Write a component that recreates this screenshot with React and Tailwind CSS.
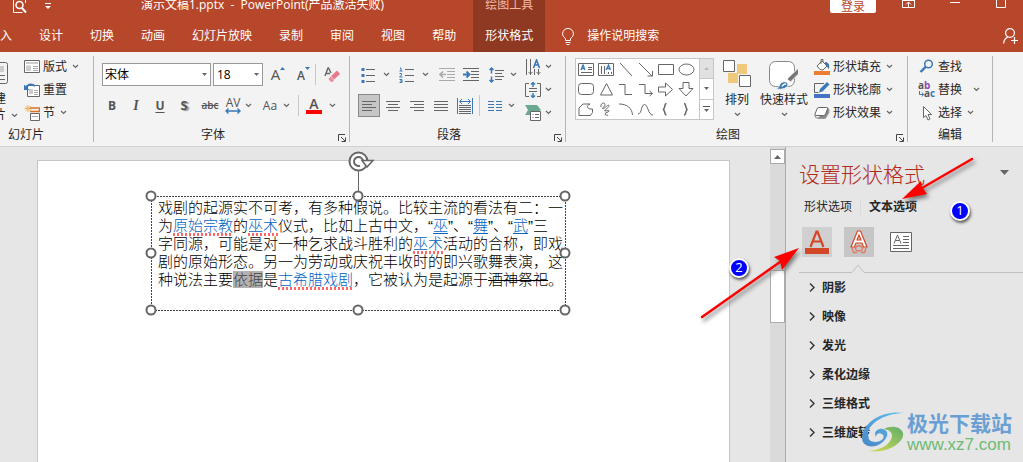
const TABS = ['入', '设计', '切换', '动画', '幻灯片放映', '录制', '审阅', '视图', '帮助']

const SECTIONS = ['阴影', '映像', '发光', '柔化边缘', '三维格式', '三维旋转']

const HANDLES = [
  ['0%', '0%'], ['50%', '0%'], ['100%', '0%'],
  ['0%', '50%'], ['100%', '50%'],
  ['0%', '100%'], ['50%', '100%'], ['100%', '100%']
]

const Icon = ({ w = 16, h = 16, children, className = '' }) => (
  <svg width={w} height={h} viewBox={`0 0 ${w} ${h}`} fill="none" stroke="#666" className={`shrink-0 ${className}`} aria-hidden="true">
    {children}
  </svg>
)

const Chevron = ({ className = '' }) => (
  <Icon w={7} h={5} className={className}>
    <path d="M1 1l2.500 2.500L6 1" stroke="#666" strokeWidth="1.200" />
  </Icon>
)

const Triangle = ({ up, color = '#666', className = '' }) => (
  <Icon w={5} h={3} className={className}>
    <path d={up ? 'M0 3h5L2.500 0z' : 'M0 0h5L2.500 3z'} fill={color} stroke="none" />
  </Icon>
)

const Divider = () => <div className="my-1 w-px shrink-0 bg-[#b4b4b4]" />

const SmallDivider = ({ className = '' }) => <div className={`h-[21px] w-px shrink-0 bg-[#c8c8c8] ${className}`} />

const Tool = ({ label, className = '', children }) => (
  <button type="button" aria-label={label} className={`flex h-[23px] shrink-0 items-center justify-center ${className}`}>
    {children}
  </button>
)

function Group({ label, launcher, className = '', labelClass = '', children }) {
  return (
    <section className={`flex shrink-0 flex-col ${className}`}>
      <div className="flex h-[72px]">{children}</div>
      <div className={`flex h-[22px] ${labelClass}`}>
        <h2 className="flex-1 text-center leading-[22px]">{label}</h2>
        {launcher && (
          <button type="button" aria-label={`${label}设置`} className="mr-[3px] mb-1 ml-1.5 self-end">
            <Icon w={8} h={8}>
              <path d="M.5 7V.5H7M3 3l4 4M7.500 3.500v4h-4" stroke="#444" />
            </Icon>
          </button>
        )}
      </div>
    </section>
  )
}

const MenuRow = ({ icon, label, chevron, chevronClass = 'ml-[5px]' }) => (
  <button type="button" className="flex h-[23px] items-center whitespace-nowrap">
    {icon}
    <span className="ml-[3px]">{label}</span>
    {chevron && <Chevron className={chevronClass} />}
  </button>
)

function Header() {
  return (
    <header className="flex h-[52px] overflow-hidden bg-[#b7472a] text-white">
      <div className="flex shrink-0 flex-col">
        <div className="flex h-5">
          <Tool label="打印预览" className="ml-[13px] h-[14px]!">
            <Icon w={14} h={14}>
              <path d="M.5 0v12.500h9M12.500 0v3" stroke="#fff" />
              <circle cx="6.500" cy="5" r="3.500" stroke="#fff" strokeWidth="1.500" />
              <path d="M9 8l4 4.500" stroke="#fff" strokeWidth="2" />
            </Icon>
          </Tool>
          <Tool label="自定义快速访问工具栏" className="ml-[18px] h-[10px]!">
            <Icon w={6} h={8}>
              <path d="M0 2.500h6" stroke="#fff" />
              <path d="M0 5h6L3 8z" fill="#fff" stroke="none" />
            </Icon>
          </Tool>
          <h1 className="ml-[90px] w-0 leading-[10px] whitespace-pre">演示文稿1.pptx  -  PowerPoint(产品激活失败)</h1>
        </div>
        <nav className="flex h-8 gap-[27px] pr-[17px]">
          {TABS.map(tab => (
            <button type="button" key={tab} className="leading-8 whitespace-nowrap">{tab}</button>
          ))}
        </nav>
      </div>

      {/* Contextual tab */}
      <div className="flex shrink-0 flex-col bg-[#8f3822] px-3">
        <span className="h-5 leading-[10px] text-[#f5b9a6]">绘图工具</span>
        <button type="button" className="h-8 leading-8">形状格式</button>
      </div>

      <div className="flex flex-1 flex-col">
        <div className="flex h-5 items-start justify-end pr-[17px]">
          <button type="button" className="h-[13px] w-[46px] rounded-b-xs bg-white leading-[8px] text-[#b7472a]">登录</button>
          <Tool label="功能区显示选项" className="ml-[26px] h-[8px]!">
            <Icon w={13} h={8}>
              <path d="M.5 0v7.500h12V0M0 .5h13M6.500 7V2M4 4.500L6.500 2 9 4.500" stroke="#fff" />
            </Icon>
          </Tool>
          <Tool label="最小化" className="ml-[35px] h-[8px]!">
            <Icon w={10} h={8}><path d="M0 2.500h10" stroke="#fff" /></Icon>
          </Tool>
          <Tool label="最大化" className="ml-[36px] h-[8px]!">
            <Icon w={10} h={8}><path d="M.5 0v7.500h9V0" stroke="#fff" /></Icon>
          </Tool>
        </div>
        <div className="flex h-8 items-center justify-between pr-[5px] pl-[17px]">
          <button type="button" className="flex items-center gap-[13px]">
            <Icon w={12} h={17}>
              <path d="M3.500 12.500v-2C1.500 9 .6 7.600.6 5.800a5.400 5.400 0 0 1 10.800 0c0 1.800-.9 3.200-2.900 4.700v2zM3.500 14.500h5M4.500 16.500h3" stroke="#fff" />
            </Icon>
            <span>操作说明搜索</span>
          </button>
          <Tool label="共享">
            <Icon w={15} h={16}>
              <circle cx="7" cy="5" r="4.400" stroke="#fff" strokeWidth="1.200" />
              <path d="M.6 15.500c.3-3.500 2-5.600 4.400-6.500M11.500 9v7M8 12.500h7" stroke="#fff" strokeWidth="1.200" />
            </Icon>
          </Tool>
        </div>
      </div>
    </header>
  )
}

function SlidesGroup() {
  return (
    <Group label="幻灯片" className="w-[93px]" labelClass="pr-[41px]">
      <div className="flex w-6 shrink-0 flex-col pt-[10px]">
        <Icon w={8} h={22}>
          <path d="M0 .5h5.500q2 0 2 2v17q0 2-2 2H0M0 13.500h5M0 17.500h5" />
          <path d="M0 4h4v6H0z" fill="#ccc" stroke="none" />
        </Icon>
        <span className="mt-[7px] flex h-4 w-1.5 justify-end overflow-hidden leading-4">建</span>
        <span className="flex items-center gap-[5px]">
          <span className="flex h-4 w-1.5 justify-end overflow-hidden leading-4">片</span>
          <Chevron />
        </span>
      </div>
      <div className="flex flex-col items-start pt-[3px]">
        <MenuRow
          label="版式"
          chevron
          icon={
            <Icon h={15}>
              <path d="M.5 1.500h15v12H.5z" fill="#fff" />
              <path d="M2 3h12v2H2zM2 6.500h5v5.500H2z" fill="#ccc" stroke="none" />
              <path d="M9 7.500h5M9 9.500h5M9 11.500h5" stroke="#aaa" />
            </Icon>
          }
        />
        <MenuRow
          label="重置"
          icon={
            <Icon>
              <path d="M3.500 3.500h12v11h-12z" fill="#fff" />
              <path d="M5 7h4v5H5z" fill="#ccc" stroke="none" />
              <path d="M10 8.500h4M10 10.500h4M10 12.500h4" stroke="#aaa" />
              <path d="M1 7c2-4.500 6-6 10-3" stroke="#3b78b5" strokeWidth="2" />
              <path d="M0 2.500V8h5.500z" fill="#3b78b5" stroke="none" />
            </Icon>
          }
        />
        <MenuRow
          label="节"
          chevron
          icon={
            <Icon>
              <path d="M4 0v7M.5 3.500h7M1.500 1l5 5M6.500 1l-5 5" stroke="#e8b460" />
              <path d="M6 3h9.500v3.500H6" stroke="#e07020" strokeWidth="1.500" />
              <path d="M6.500 8.500h9v7h-9z" fill="#fff" />
              <path d="M8 11.500h6" stroke="#aaa" />
            </Icon>
          }
        />
      </div>
    </Group>
  )
}

function FontGroup() {
  return (
    <Group label="字体" launcher className="w-[255px]">
      <div className="flex flex-col gap-2 pt-[11px] pl-2 text-[#555]">
        <div className="flex items-center">
          <label className="relative flex items-center">
            <select aria-label="字体" className="h-[23px] w-[109px] appearance-none border border-[#999] bg-white px-0.5 text-[12px] leading-5 text-black">
              <option>宋体</option>
            </select>
            <Triangle className="pointer-events-none absolute right-1" />
          </label>
          <label className="relative ml-0.5 flex items-center">
            <select aria-label="字号" className="h-[23px] w-[50px] appearance-none border border-[#999] bg-white px-[3px] text-[12px] leading-5 text-black">
              <option>18</option>
            </select>
            <Triangle className="pointer-events-none absolute right-1" />
          </label>
          <Tool label="增大字号" className="ml-2 w-[14px]">
            <span className="text-[15px] font-medium">A</span>
            <Triangle up color="#3b78b5" className="mb-3" />
          </Tool>
          <Tool label="减小字号" className="ml-3 w-[13px]">
            <span className="mt-0.5 text-[12px] font-semibold">A</span>
            <Triangle color="#3b78b5" className="mb-3" />
          </Tool>
          <SmallDivider className="mr-[6px] ml-[5px]" />
          <Tool label="清除格式" className="ml-0.5">
            <Icon>
              <path d="M1 9L4 1h.5L7 6M2.500 6.500H6" strokeWidth="1.400" />
              <path d="M7 9l6-5.500L16 7l-6 5.500z" fill="#e8798c" stroke="none" />
              <path d="M6.500 9.500L4.500 12l2.500 3h1.500l1.500-2z" fill="#ec8b9b" stroke="none" />
            </Icon>
          </Tool>
        </div>
        <div className="flex items-center">
          <Tool label="加粗" className="w-5"><b>B</b></Tool>
          <Tool label="倾斜" className="ml-1 w-5"><i className="font-['Liberation_Serif'] text-[14px] font-bold">I</i></Tool>
          <Tool label="下划线" className="ml-1 w-5"><b className="underline underline-offset-2">U</b></Tool>
          <Tool label="文字阴影" className="ml-1 w-5"><b className="text-[13px] text-shadow-[2px_1px_1px_#999]">S</b></Tool>
          <Tool label="删除线" className="ml-1 w-6"><span className="text-[10px] font-semibold line-through">abc</span></Tool>
          <Tool label="字符间距" className="w-[22px] flex-col">
            <span className="text-[12px] leading-[10px] font-medium">AV</span>
            <Icon w={16} h={6}><path d="M1 3h14M3.500.5L1 3l2.500 2.500M12.500.5L15 3l-2.500 2.500" stroke="#3b78b5" strokeWidth="1.400" /></Icon>
          </Tool>
          <Chevron className="ml-px" />
          <Tool label="更改大小写" className="ml-[9px] w-[18px]"><span className="text-[12px] font-medium">Aa</span></Tool>
          <Chevron className="ml-1" />
          <SmallDivider className="ml-2" />
          <Tool label="字体颜色" className="ml-[7px] w-4 flex-col">
            <span className="text-[14px] leading-[12px] font-semibold">A</span>
            <span className="h-1 w-4 bg-[#f00]" />
          </Tool>
          <Chevron className="ml-[7px]" />
        </div>
      </div>
    </Group>
  )
}

function ParagraphGroup() {
  return (
    <Group label="段落" launcher className="w-[215px]">
      <div className="flex flex-col gap-2 pt-[11px] pl-2">
        <div className="flex items-center">
          <Tool label="项目符号" className="ml-[3px]">
            <Icon w={15}>
              <path d="M5 2.500h9M5 8.500h9M5 14.500h9" />
              <path d="M.5 1h3v3h-3zM.5 7h3v3h-3zM.5 13h3v3h-3z" fill="#3b78b5" stroke="none" />
            </Icon>
          </Tool>
          <Chevron className="ml-[7px]" />
          <Tool label="编号" className="ml-[9px]">
            <Icon w={16}>
              <path d="M6 2.500h9M6 8.500h9M6 14.500h9" />
              <path d="M1 1h1v3M.5 4h3M.5 6.500h2v1.500L.5 10h3M.5 12.500h2.500v3H.5M1 14h2" stroke="#3b78b5" />
            </Icon>
          </Tool>
          <Chevron className="ml-[7px]" />
          <Tool label="减少缩进" className="ml-[10px]">
            <Icon>
              <path d="M0 1.500h16M8 4.500h8M8 7.500h8M8 10.500h8M0 13.500h16" stroke="#aaa" />
              <path d="M1 7.500h6M4 4.500l-3 3 3 3" stroke="#aaa" strokeWidth="1.600" />
            </Icon>
          </Tool>
          <Tool label="增加缩进" className="ml-2">
            <Icon>
              <path d="M0 1.500h16M8 4.500h8M8 7.500h8M8 10.500h8M0 13.500h16" />
              <path d="M0 7.500h6M3.500 4.500l3 3-3 3" stroke="#3b78b5" strokeWidth="1.800" />
            </Icon>
          </Tool>
          <Tool label="行距" className="ml-[10px]">
            <Icon w={15}>
              <path d="M6 3.500h9M6 6.500h7M6 9.500h9M6 12.500h7" />
              <path d="M2.500 1v5.500M2.500 9.500V15M.5 3l2-2 2 2M.5 13l2 2 2-2" stroke="#3b78b5" strokeWidth="1.500" />
            </Icon>
          </Tool>
          <Chevron className="ml-1.5" />
        </div>
        <div className="flex items-center">
          <Tool label="左对齐" className="w-[22px] border border-[#888] bg-[#c6c6c6]">
            <Icon w={14} h={12}><path d="M0 1.500h14M0 4.500h10M0 7.500h14M0 10.500h10" /></Icon>
          </Tool>
          <Tool label="居中" className="ml-1.5">
            <Icon w={14} h={12}><path d="M0 1.500h14M2 4.500h10M0 7.500h14M2 10.500h10" /></Icon>
          </Tool>
          <Tool label="右对齐" className="ml-[10px]">
            <Icon w={14} h={12}><path d="M0 1.500h14M4 4.500h10M0 7.500h14M4 10.500h10" /></Icon>
          </Tool>
          <Tool label="两端对齐" className="ml-[10px]">
            <Icon w={14} h={12}><path d="M0 1.500h14M0 4.500h14M0 7.500h14M0 10.500h14" /></Icon>
          </Tool>
          <Tool label="分散对齐" className="ml-[9px]">
            <Icon>
              <path d="M.5 0v16M15.500 0v16M2.500 3.500h11M5 1L2.500 3.500 5 6M11 1l2.500 2.500L11 6" stroke="#3b78b5" />
              <path d="M2 7.500h12M2 9.500h12M2 11.500h12M2 13.500h12M2 15.500h12" />
            </Icon>
          </Tool>
          <SmallDivider className="ml-[6px]" />
          <Tool label="分栏" className="ml-2">
            <Icon w={14} h={12}>
              <path d="M0 1.500h6M8 1.500h6M0 4.500h6M8 4.500h6M0 7.500h6M8 7.500h6M0 10.500h6M8 10.500h6" stroke="#3b78b5" />
            </Icon>
          </Tool>
          <Chevron className="ml-1.5" />
        </div>
      </div>
      <div className="ml-2 flex flex-col pt-[3px]">
        <Tool label="文字方向">
          <Icon>
            <path d="M1.500 0v16M5.500 0v16M9.500 10v6M13.500 10v6M3.500 13l2 2 2-2M11.500 13l2 2 2-2" />
            <path d="M8.500 9L11.500 1l3 8M9.500 6h4" stroke="#3b78b5" strokeWidth="1.600" />
          </Icon>
          <Chevron className="ml-1" />
        </Tool>
        <Tool label="对齐文本">
          <Icon>
            <path d="M4 1.500H.5v13H4M12 1.500h3.500v13H12M4 6.500h8M4 9.500h8" />
            <path d="M8 0v5M8 11v5M6 2.500L8 .5l2 2M6 13.500l2 2 2-2" stroke="#3b78b5" strokeWidth="1.400" />
          </Icon>
          <Chevron className="ml-1" />
        </Tool>
        <Tool label="转换为 SmartArt">
          <Icon>
            <path d="M0 0h12l4 5-3 2H5v3H0l3-5z" fill="#6aa88f" stroke="none" />
            <path d="M5.500 6.500h10v9h-10z" fill="#fff" />
            <path d="M7.500 9.500h1M10 9.500h4M7.500 12.500h1M10 12.500h4" />
          </Icon>
          <Chevron className="ml-1" />
        </Tool>
      </div>
    </Group>
  )
}

const SHAPES = [
  <><path d="M1.500 3.500h15v12h-15zM11 7.500h4M11 9.500h4M4 12.500h11" /><path d="M4 10l2-5 2 5M5 8.500h2.500" stroke="#3b78b5" strokeWidth="1.300" /></>,
  <><path d="M1.500 3.500h15v12h-15zM4.500 6v8M7.500 6v8M11.500 12v2M14.500 12v2" /><path d="M9 10l2.500-5 2 5M10 8.500h3" stroke="#3b78b5" strokeWidth="1.300" /></>,
  <path d="M3 3l12 13" />,
  <path d="M2 3l13 13M15.500 11v5h-5" />,
  <path d="M1.500 4.500h15v10h-15z" />,
  <ellipse cx="9.500" cy="9.500" rx="7.500" ry="5.500" />,
  <rect x="1.500" y="3.500" width="15" height="11" rx="3" />,
  <path d="M9.500 3.500l6 11.500H3.500z" />,
  <path d="M2 4.500h6v10h7" />,
  <path d="M2 4.500h6v9h7M12.500 11l3 2.500-3 2.500" />,
  <path d="M1.500 7h7V3l7 6.500-7 6.500v-4h-7z" />,
  <path d="M6 2.500h6v6h4L9 16 2 8.500h4z" />,
  <path d="M2 15.500V8l4-4h7c-4 2-3 4 0 5h2.500v3.500l-2 3z" />,
  <path d="M4 7c-1-4 4-5 4-2.500S3.500 9 6 8.500s5-4.500 6-3-6 5.500-4 5.500 4-1.500 4 0-4 1-4 3 3 0 3 2" />,
  <path d="M2 4c8 0 13 4 13.500 11" />,
  <path d="M1 14c4 0 3-9.500 6.500-9.500S11 15 16 15" />,
  <path d="M9.500 3.500C7 3.500 8.500 9 6 9.500c2.500.5 1 5.500 3.500 5.500" strokeWidth="1.500" />,
  <path d="M7 3.500c2.500 0 1 5.500 3.500 6-2.500.5-1 5.500-3.500 5.500" strokeWidth="1.500" />
]

function DrawingGroup() {
  return (
    <Group label="绘图" launcher className="w-[341px]">
      <div className="mt-1.5 ml-[9px] flex h-[62px] border border-[#c6c6c6] bg-white">
        <div className="grid grid-cols-6">
          {SHAPES.map((shape, i) => (
            <button type="button" key={i} aria-label={`形状 ${i + 1}`} className="flex h-5 w-5 items-center justify-center">
              <Icon w={18} h={18}>{shape}</Icon>
            </button>
          ))}
        </div>
        <div className="ml-[3px] flex w-[14px] flex-col divide-y divide-[#c6c6c6] border-l border-[#c6c6c6]">
          <button type="button" aria-label="上一行" className="flex flex-1 items-center justify-center bg-[#e1e1e1]"><Triangle up color="#bbb" /></button>
          <button type="button" aria-label="下一行" className="flex flex-1 items-center justify-center"><Triangle /></button>
          <button type="button" aria-label="其他形状" className="flex flex-1 flex-col items-center justify-center gap-0.5">
            <span className="h-px w-[7px] bg-[#555]" />
            <Triangle />
          </button>
        </div>
      </div>
      <button type="button" className="flex w-[46px] flex-col items-center pt-2">
        <Icon w={28} h={28}>
          <path d="M14 4h10v10h-10zM5 13h10v10H5z" fill="#efc87c" stroke="none" />
          <path d="M.5.5h11v11H.5zM16.500 15.500h11v11h-11z" fill="#fff" />
        </Icon>
        <span className="mt-1 leading-4">排列</span>
        <Chevron className="mt-1" />
      </button>
      <button type="button" className="flex w-12 flex-col items-center pt-2">
        <Icon w={30} h={30}>
          <rect x=".5" y="1.500" width="25" height="25" rx="6" fill="#fff" stroke="#888" />
          <path d="M29.500 8v6l-8 8-3.500-3z" fill="#777" stroke="#f3f3f3" />
          <path d="M7 29c2-1 3-2 4-5 2-3 7-3 8 0 0 4-5 6-12 5z" fill="#3b78b5" stroke="#f3f3f3" />
          <path d="M13 26.500c1-2 3-3 4-2" stroke="#fff" strokeWidth="1.500" />
        </Icon>
        <span className="mt-0.5 leading-4 whitespace-nowrap">快速样式</span>
        <Chevron className="mt-1" />
      </button>
      <div className="ml-1.5 flex flex-col items-start pt-[3px]">
        <MenuRow
          label="形状填充"
          chevron
          icon={
            <Icon>
              <path d="M11 3c3 0 5 2 4 7-2-1-1-3-4-4z" fill="#3b78b5" stroke="none" />
              <path d="M3 7l5-5 5 5-4 4-3-.5zM7 5V.5h2V3" fill="#fff" />
              <path d="M0 12h16v4H0z" fill="#ed7d31" stroke="none" />
            </Icon>
          }
        />
        <MenuRow
          label="形状轮廓"
          chevron
          icon={
            <Icon>
              <path d="M10 1.500H.5v9h4" />
              <path d="M5 10.500L6 7l7-7 2.500 2.500-7 7z" fill="#3b78b5" stroke="none" />
              <path d="M0 12h16v4H0z" fill="#4472c4" stroke="none" />
            </Icon>
          }
        />
        <MenuRow
          label="形状效果"
          chevron
          icon={
            <Icon>
              <path d="M4 13.500h7.500l3.500-6V4l-2-1.500z" fill="#888" stroke="#aaa" />
              <path d="M5 2.500h7.500q1.500 0 1 1.500l-2 5q-.5 1.500-2 1.500H2q-1.500 0-1-1.500l2-5q.5-1.500 2-1.500z" fill="#fff" />
              <path d="M1 10.500q0 2.500 2 2.500h6.500q1.500 0 2-2" stroke="#888" />
            </Icon>
          }
        />
      </div>
    </Group>
  )
}

function EditingGroup() {
  return (
    <Group label="编辑" className="w-[84px]">
      <div className="flex flex-col items-start pt-[3px] pl-[11px]">
        <MenuRow
          label="查找"
          icon={
            <Icon>
              <circle cx="9.500" cy="5" r="3.800" stroke="#3b78b5" strokeWidth="1.500" />
              <path d="M6.500 8L1.500 13" stroke="#3b78b5" strokeWidth="2.400" />
            </Icon>
          }
        />
        <MenuRow
          label="替换"
          chevron
          chevronClass="ml-[11px]"
          icon={
            <svg width="16" height="16" viewBox="0 0 16 16" className="shrink-0 overflow-visible font-bold" fontSize="10" aria-hidden="true">
              <text x="-1" y="7" fill="#555">a<tspan fill="#8a4fb0">b</tspan></text>
              <text x="5" y="15" fill="#555">a<tspan fill="#3b78b5">c</tspan></text>
              <path d="M.5 9v3.500h4M3 10.500l1.500 2-1.500 2" fill="none" stroke="#3b78b5" />
            </svg>
          }
        />
        <MenuRow
          label="选择"
          chevron
          icon={
            <Icon>
              <path d="M4.500 1.500v11l2.500-2 2 4.500 2-1-2-4.500h3.500z" fill="#fff" />
            </Icon>
          }
        />
      </div>
    </Group>
  )
}

const Term = ({ children, checked }) => {
  const link = <a href="#" className="text-[#0563c1] underline underline-offset-2">{children}</a>
  return checked ? (
    <span className="underline decoration-[#f66] decoration-dotted decoration-2 underline-offset-3">{link}</span>
  ) : link
}

function Slide() {
  return (
    <div className="flex flex-1 items-start border border-b-0 border-[#c6c6c6] bg-white">
      <div className="relative mt-[35px] ml-[113px] h-[115px] w-[415px] pt-[3px] pl-[7px] font-['Liberation_Sans','Noto_Sans_CJK_SC',sans-serif] text-[15px] leading-[18px] font-light whitespace-nowrap text-black">
        <p>戏剧的起源实不可考，有多种假说。比较主流的看法有二：一</p>
        <p>
          为<Term checked>原始宗教</Term>的<Term checked>巫术</Term>仪式，比如上古中文，“<Term>巫</Term>”、“<Term>舞</Term>”、“<Term>武</Term>”三
        </p>
        <p>字同源，可能是对一种乞求战斗胜利的<Term checked>巫术</Term>活动的合称，即戏</p>
        <p>剧的原始形态。另一为劳动或庆祝丰收时的即兴歌舞表演，这</p>
        <p>
          种说法主要<mark className="bg-[#b2b2b2] text-[#444]">依据</mark>是<Term checked>古希腊戏剧</Term>，它被认为是起源于<s>酒神祭祀</s>。
        </p>

        {/* Selection frame and handles */}
        <svg className="pointer-events-none absolute top-0 left-0 h-[114px] w-[414px] overflow-visible" fill="none" stroke="#666">
          <rect width="100%" height="100%" stroke="#444" strokeDasharray="2 1" shapeRendering="crispEdges" />
          <path d="M207.500 -26V-5" />
          {HANDLES.map(([x, y]) => (
            <circle key={x + y} cx={x} cy={y} r="4.500" fill="#fff" strokeWidth="2" />
          ))}
          <circle cx="207.500" cy="-34.500" r="9" fill="#fff" strokeWidth="2" />
          <path d="M212 -34.500a4.500 4.500 0 1 0-3 4.200" strokeWidth="2" />
          <path d="M211 -35.500h11l-6 6.500z" fill="#fff" strokeWidth="1.500" />
        </svg>
      </div>
    </div>
  )
}

function Scrollbar() {
  return (
    <div className="flex w-[15px] shrink-0 flex-col bg-[#dadada] pt-0.5">
      <button type="button" aria-label="向上滚动" className="flex h-[15px] items-center justify-center border border-[#ababab] bg-white">
        <Icon w={7} h={4}><path d="M0 4h7L3.500 0z" fill="#666" stroke="none" /></Icon>
      </button>
      <div className="mt-[106px] h-[53px] border border-[#ababab] bg-white" />
    </div>
  )
}

const Badge = ({ className, children }) => (
  <span className={`absolute flex h-5 w-5 items-center justify-center rounded-full border-2 border-white bg-[#00f] text-[13px] text-white shadow-[1px_2px_3px_#555] ${className}`}>
    {children}
  </span>
)

function Watermark() {
  return (
    <div className="absolute top-[264px] left-[76px] flex items-center">
      <svg width="44" height="42" viewBox="0 0 44 42" aria-hidden="true">
        <defs>
          <linearGradient id="swirl" x1="0" y1="1" x2="1" y2="0">
            <stop offset="0" stopColor="#4a86c8" />
            <stop offset="1" stopColor="#5fc3ee" />
          </linearGradient>
          <linearGradient id="leaf" x1="0" y1="1" x2="1" y2="0">
            <stop offset="0" stopColor="#d8dc50" />
            <stop offset="1" stopColor="#5fae6a" />
          </linearGradient>
        </defs>
        <path d="M43 1C24 1 8 10 6 21c-1 7 3 9 7 9 7 0 11-5 7-8-3-2-6 0-6 3-3-5 2-9 7-8 4 1 5 4 4 7-3 7-11 12-19 10C0 32-1 27 1 21 5 8 22-2 43 1z" fill="url(#swirl)" />
        <path d="M22 17c6-4 17-3 19 4 2 9-15 21-35 18 14-1 23-7 24-15 0-4-3-6-8-7z" fill="url(#leaf)" />
      </svg>
      <div className="ml-px">
        <p className="text-[21px] leading-6 font-bold whitespace-nowrap text-[#6a9fd4]">极光下载站</p>
        <p className="font-['Liberation_Sans'] text-[17px] leading-5 text-[#6dbb74]">www.xz7.com</p>
      </div>
    </div>
  )
}

function FormatPanel() {
  return (
    <aside className="relative w-[238px] shrink-0 border-l border-[#ababab]">
      <div className="flex items-center justify-between pt-3 pr-[14px] pl-[13px]">
        <h2 className="text-[21px] leading-[30px] font-light text-[#b02b1a]">设置形状格式</h2>
        <button type="button" aria-label="任务窗格选项" className="-mt-1">
          <Icon w={9} h={5}><path d="M0 0h9L4.500 5z" fill="#666" stroke="none" /></Icon>
        </button>
      </div>
      <div className="mt-2 flex items-center pl-[18px] leading-5">
        <button type="button">形状选项</button>
        <span className="mx-2 h-4 w-px bg-[#dadada]" />
        <button type="button" className="font-bold">文本选项</button>
      </div>
      <div className="mt-[10px] flex items-center pl-4">
        <button type="button" aria-label="文本填充与轮廓" className="flex h-[30px] w-[30px] items-center justify-center bg-[#d0d0d0]">
          <Icon w={24} h={24}>
            <path d="M5.500 17L11.500 1.500h1L18.500 17M8 11.500h8" stroke="#d24726" strokeWidth="2.200" />
            <path d="M0 18h24v6H0z" fill="#d24726" stroke="none" />
          </Icon>
        </button>
        <button type="button" aria-label="文本效果" className="ml-3 flex h-[30px] w-[30px] items-center justify-center bg-[#c6c6c6]">
          <Icon w={20} h={24}>
            <path d="M2 17L8.500 1h3L18 17h-3.500l-1.500-4H7l-1.500 4zM8 10h4l-2-5z" fill="#fff" stroke="#d24726" strokeWidth="1.200" fillRule="evenodd" />
            <path d="M3 18l1.500 4.500H8M17 18l-1.500 4.500H12M6.500 18c1-3 6-3 7 0 0 4-7 4-7 0z" stroke="#e07a60" strokeWidth="1.300" />
          </Icon>
        </button>
        <button type="button" aria-label="文本框" className="ml-4">
          <Icon w={22} h={20}>
            <path d="M.5.5h21v19H.5z" fill="#fff" />
            <path d="M13 4.500h6M13 7.500h6M13 10.500h6M3 13.500h16M3 16.500h16M4 11.500L7.500 3 11 11.500M5.500 8.500h4" />
          </Icon>
        </button>
      </div>
      <div className="mt-[7px] ml-[13px] flex items-end">
        <span className="h-px w-[53px] bg-[#c0c0c0]" />
        <Icon w={12} h={9}><path d="M0 8.500L6 1l6 7.500" stroke="#c0c0c0" /></Icon>
        <span className="h-px flex-1 bg-[#c0c0c0]" />
      </div>
      <ul>
        {SECTIONS.map(name => (
          <li key={name}>
            <button type="button" className="flex h-[29px] items-center gap-[7px] pl-[23px] font-bold">
              <Icon w={6} h={9}><path d="M1 .5l4 4-4 4" stroke="#333" strokeWidth="1.400" /></Icon>
              {name}
            </button>
          </li>
        ))}
      </ul>

      {/* Step annotations */}
      <svg className="pointer-events-none absolute top-0 left-[-86px] h-[180px] w-[290px] drop-shadow-[2px_3px_2px_#777]" viewBox="0 0 290 180" aria-hidden="true">
        <path d="M272 12L222 41" stroke="#f00" strokeWidth="2.500" strokeLinecap="round" />
        <path d="M202 52L221 34l1 6 5 7z" fill="#f00" />
        <path d="M2 170L80 115" stroke="#f00" strokeWidth="2.500" strokeLinecap="round" />
        <path d="M99 101L74 110l6 4 2 9z" fill="#f00" />
      </svg>
      <Badge className="top-[54px] left-[164px]">1</Badge>
      <Badge className="top-[111px] left-[-57px]">2</Badge>
      <Watermark />
    </aside>
  )
}

export default function App() {
  return (
    <div className="flex min-h-screen flex-col overflow-hidden bg-[#e6e6e6] font-['Open_Sans','Noto_Sans_CJK_SC',sans-serif] text-[12px] text-[#262626]">
      <Header />
      <div className="flex border-b border-[#d0d0d0] bg-[#f3f3f3]">
        <SlidesGroup />
        <Divider />
        <FontGroup />
        <Divider />
        <ParagraphGroup />
        <Divider />
        <DrawingGroup />
        <Divider />
        <EditingGroup />
        <Divider />
      </div>
      <div className="flex flex-1">
        <main className="flex flex-1 pt-[13px] pr-10 pl-[37px]">
          <Slide />
        </main>
        <Scrollbar />
        <FormatPanel />
      </div>
    </div>
  )
}
